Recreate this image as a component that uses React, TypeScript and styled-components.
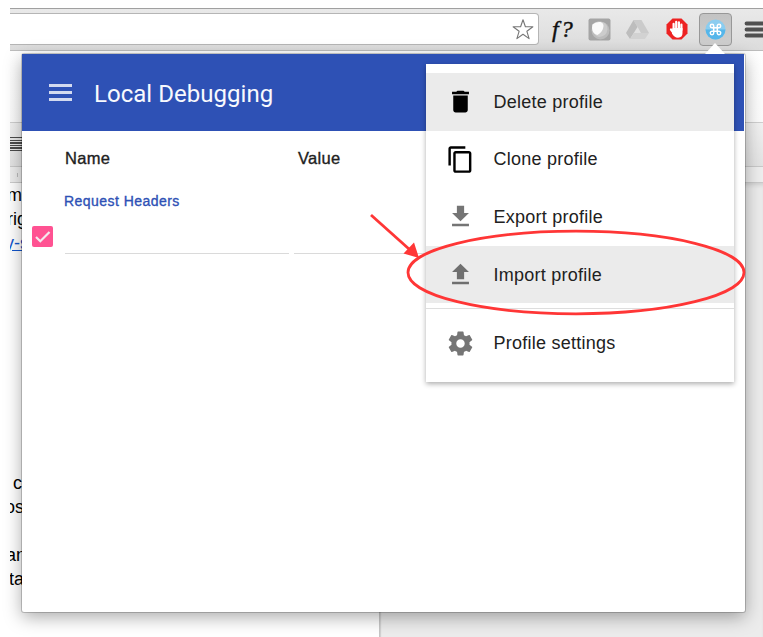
import React from "react";
import styled, { createGlobalStyle } from "styled-components";

const GlobalStyle = createGlobalStyle`
  * { box-sizing: border-box; }
  body { margin: 0; background: #fff; overflow: hidden; }
`;

const Screen = styled.main`
  position: relative;
  width: 763px;
  height: 637px;
  padding: 8px 0 0 10px;
  overflow: hidden;
  background: #fff;
  font-family: "Liberation Sans", Arial, sans-serif;
`;

const Browser = styled.div`
  height: 629px;
  display: flex;
  flex-direction: column;
  overflow: hidden;
`;

const BrowserBar = styled.div`
  height: 43px;
  flex: none;
  display: flex;
  padding-top: 4px;
  border-top: 1px solid #a0a0a0;
  border-bottom: 1px solid #bdbdbd;
  background: linear-gradient(#e9e9e9, #dcdcdc);
`;

const AddressBar = styled.div`
  width: 529px;
  height: 32px;
  flex: none;
  display: flex;
  justify-content: flex-end;
  padding: 4px 4px 0 0;
  border: 1px solid #b5b5b5;
  border-left: 0;
  border-radius: 0 4px 4px 0;
  background: #fff;
`;

const Extensions = styled.div`
  display: flex;
  align-items: center;
  height: 32px;
`;

const FontTool = styled.span`
  width: 26px;
  margin-left: 13px;
  font: italic 400 24px/30px "Liberation Serif", serif;
  letter-spacing: 2px;
  color: #111;
  -webkit-text-stroke: 0.4px #111;
  white-space: nowrap;
`;

const ExtensionIcon = styled.svg<{ $gap: number }>`
  flex: none;
  margin-left: ${(p) => p.$gap}px;
  display: block;
`;

const ActiveExtension = styled.div`
  width: 33px;
  height: 33px;
  flex: none;
  margin-left: 11px;
  display: grid;
  place-items: center;
  border: 1px solid #989898;
  border-radius: 4px;
  background: linear-gradient(#c3c3c3, #cecece);
`;

const PageTop = styled.div`
  height: 71px;
  flex: none;
  background: linear-gradient(#fff, #fbfbfb);
`;

const EditorBar = styled.div`
  height: 44px;
  flex: none;
  padding-top: 14px;
  border-top: 1px solid #cfcfcf;
  background: linear-gradient(#f1f1f1, #e3e3e3);
`;

const AlignLines = styled.div`
  width: 13px;
  height: 14px;
  background: repeating-linear-gradient(#4b4b4b 0 1.3px, #e8e8e8 1.3px 2.6px);
`;

const Ruler = styled.div`
  height: 17px;
  flex: none;
  padding: 6px 0 0 7px;
  border-top: 1px solid #c9c9c9;
  border-bottom: 1px solid #cacaca;
  background: #eee;
`;

const RulerTick = styled.div`
  width: 1px;
  height: 4px;
  background: #bbb;
`;

const Workspace = styled.div`
  flex: 1;
  display: flex;
  background: #ececec;
  box-shadow: inset 0 4px 4px -2px #d0d0d0;
`;

const Document = styled.div`
  width: 370px;
  border-right: 1px solid #c6c6c6;
  background: #fff;
  box-shadow: 1px 0 1px #d2d2d2;
  font-size: 18px;
  line-height: 24px;
  color: #000;
  overflow: hidden;
`;

const DocLine = styled.div<{ $shift: number; $gap?: number; $link?: boolean }>`
  height: 24px;
  margin-top: ${(p) => p.$gap ?? 0}px;
  text-indent: ${(p) => p.$shift}px;
  white-space: nowrap;
  color: ${(p) => (p.$link ? "#1155cc" : "inherit")};
  text-decoration: ${(p) => (p.$link ? "underline" : "none")};
`;

const Popup = styled.section`
  position: absolute;
  left: 22px;
  top: 54px;
  width: 723px;
  height: 558px;
  background: #fff;
  border-radius: 2px;
  box-shadow: 0 0 0 1px rgba(0, 0, 0, 0.19), 0 5px 18px rgba(0, 0, 0, 0.34);
`;

const PopupPointer = styled.svg`
  position: absolute;
  left: 682px;
  top: -12px;
  display: block;
`;

const AppBar = styled.header`
  height: 77px;
  display: flex;
  align-items: center;
  margin-right: 1px;
  padding-left: 27px;
  background: #2e51b5;
`;

const MenuBars = styled.div`
  width: 23px;
  height: 17px;
  margin-top: -1px;
  display: flex;
  flex-direction: column;
  justify-content: space-between;
`;

const Bar = styled.span`
  height: 3px;
  background: #d3daf0;
`;

const Title = styled.h1`
  margin: 3px 0 0 22px;
  font: 400 24px/32px Roboto, sans-serif;
  letter-spacing: 0.03px;
  color: #f8f9fd;
`;

const ColumnHeads = styled.div`
  display: grid;
  grid-template-columns: 233px 1fr;
  padding: 17px 0 1px 43px;
  font-size: 16.5px;
  line-height: 20px;
  letter-spacing: 0.3px;
  color: #212121;
  -webkit-text-stroke: 0.35px #212121;
`;

const GroupTitle = styled.h2`
  margin: 23px 0 0 42px;
  font-size: 14px;
  font-weight: 400;
  line-height: 18px;
  letter-spacing: 0.45px;
  color: #2e51b5;
  -webkit-text-stroke: 0.35px #2e51b5;
`;

const HeaderRow = styled.div`
  display: flex;
  align-items: flex-start;
  height: 50px;
  padding: 15px 0 0 10px;
`;

const Checkbox = styled.span`
  width: 21px;
  height: 21px;
  margin-top: 1px;
  display: grid;
  border-radius: 2px;
  background: #ff5292;
`;

const Field = styled.div<{ $width: number; $gap: number }>`
  width: ${(p) => p.$width}px;
  height: 29px;
  margin-left: ${(p) => p.$gap}px;
  border-bottom: 1px solid #dadada;
`;

const Menu = styled.nav`
  position: absolute;
  left: 404px;
  top: 9.5px;
  width: 308px;
  height: 318.5px;
  padding-top: 9.5px;
  background: #fff;
  box-shadow: 0 2px 5px rgba(0, 0, 0, 0.32);
`;

const MenuItem = styled.div<{ $active?: boolean }>`
  height: 57.6px;
  display: flex;
  align-items: center;
  padding-left: 19.5px;
  background: ${(p) => (p.$active ? "#ebebeb" : "#fff")};
  font-size: 18px;
  letter-spacing: 0.24px;
  color: #212121;
`;

const MenuLabel = styled.span`
  padding-top: 1px;
`;

const MenuIcon = styled.svg`
  width: 29px;
  height: 29px;
  flex: none;
  margin-right: 19px;
`;

const Divider = styled.div`
  height: 1px;
  margin: 5px 0 5px;
  background: #dedede;
`;

const Annotation = styled.svg`
  position: absolute;
  left: 0;
  top: 0;
  pointer-events: none;
`;

const menu = [
  { label: "Delete profile", color: "#000", active: true, d: "M6 19c0 1.1.9 2 2 2h8c1.1 0 2-.9 2-2V7H6v12zM19 4h-3.5l-1-1h-5l-1 1H5v2h14V4z" },
  { label: "Clone profile", color: "#000", d: "M16 1H4c-1.1 0-2 .9-2 2v14h2V3h12V1zm3 4H8c-1.1 0-2 .9-2 2v14c0 1.1.9 2 2 2h11c1.1 0 2-.9 2-2V7c0-1.1-.9-2-2-2zm0 16H8V7h11v14z" },
  { label: "Export profile", color: "#757575", d: "M19 9h-4V3H9v6H5l7 7 7-7zM5 18v2h14v-2H5z" },
  { label: "Import profile", color: "#6f6f6f", active: true, d: "M9 16h6v-6h4l-7-7-7 7h4zm-4 2h14v2H5z" },
];

const gear =
  "M19.43 12.98c.04-.32.07-.64.07-.98s-.03-.66-.07-.98l2.11-1.65c.19-.15.24-.42.12-.64l-2-3.46c-.12-.22-.39-.3-.61-.22l-2.49 1c-.52-.4-1.08-.73-1.69-.98l-.38-2.65C14.46 2.18 14.25 2 14 2h-4c-.25 0-.46.18-.49.42l-.38 2.65c-.61.25-1.17.59-1.69.98l-2.49-1c-.23-.09-.49 0-.61.22l-2 3.46c-.13.22-.07.49.12.64l2.11 1.65c-.04.32-.07.65-.07.98s.03.66.07.98l-2.11 1.65c-.19.15-.24.42-.12.64l2 3.46c.12.22.39.3.61.22l2.49-1c.52.4 1.08.73 1.69.98l.38 2.65c.03.24.24.42.49.42h4c.25 0 .46-.18.49-.42l.38-2.65c.61-.25 1.17-.59 1.69-.98l2.49 1c.23.09.49 0 .61-.22l2-3.46c.12-.22.07-.49-.12-.64l-2.11-1.65zM12 15.5c-1.93 0-3.5-1.57-3.5-3.5s1.57-3.5 3.5-3.5 3.5 1.57 3.5 3.5-1.57 3.5-3.5 3.5z";

function Toolbar() {
  return (
    <BrowserBar>
      <AddressBar>
        <svg width="22" height="23" viewBox="0 0 22 23">
          <path d="M11 1.8l2.4 7h7.5l-6 4.5 2.2 7.3-6.1-4.4-6.1 4.4 2.2-7.3-6-4.5h7.5z" fill="#fff" stroke="#777" strokeWidth="1.1" strokeLinejoin="round" />
        </svg>
      </AddressBar>
      <Extensions>
        <FontTool>f?</FontTool>
        <ExtensionIcon $gap={10} width="23" height="23" viewBox="0 0 23 23">
          <rect x=".5" y=".5" width="22" height="22" rx="2" fill="#a5a5a5" />
          <circle cx="12.5" cy="12.5" r="9" fill="#bcbcbc" />
          <path d="M4 7q2-3 6-3.5q10 0 9.5 8-1 7-8.500 7.500-7-2-7-12z" fill="#ccc" />
          <path d="M4.5 6.5q3-3 8-2.5 3 1 3 4-.5 6-6 9-5-1-5.500-7z" fill="#fafafa" />
        </ExtensionIcon>
        <ExtensionIcon $gap={15} width="23" height="21" viewBox="0 0 23 21">
          <path d="M7.5 1h8L23 14h-8z" fill="#cbcbcb" />
          <path d="M7.5 1l4 7L4 20 0 14z" fill="#bdbdbd" />
          <path d="M8 14h15l-4 6H4z" fill="#d2d2d2" />
        </ExtensionIcon>
        <ExtensionIcon $gap={17} width="22" height="22" viewBox="0 0 22 22">
          <path d="M6.5.5h9l6 6v9l-6 6h-9l-6-6v-9z" fill="#ed2222" />
          <path d="M7.6 12V5.800M10.200 11V3.800M12.900 11V4.300M15.400 12V6.500M5 11.500l3 4" fill="none" stroke="#fff" strokeWidth="2.2" strokeLinecap="round" />
          <path d="M6.5 10h10v5q0 4.500-4.500 4.700Q8 19.600 6 15.500z" fill="#fff" />
        </ExtensionIcon>
        <ActiveExtension>
          <svg width="21" height="21" viewBox="0 0 21 21">
            <circle cx="10.5" cy="10.5" r="10" fill="#8bcdf0" />
            <path d="M.5 10.5a10 10 0 0 0 20 0z" fill="#55b6ea" />
            <path d="M8.7 8.7h3.600v3.600H8.700zM8.700 8.700H7A1.700 1.700 0 1 1 8.700 7zM12.300 8.700V7A1.700 1.700 0 1 1 14 8.700zM12.300 12.300H14A1.700 1.700 0 1 1 12.300 14zM8.700 12.300V14A1.700 1.700 0 1 1 7 12.300z" fill="none" stroke="#fff" strokeWidth="1.5" />
          </svg>
        </ActiveExtension>
        <ExtensionIcon $gap={12} width="20" height="17" viewBox="0 0 20 17">
          <path d="M2.5 2.5h20M2.5 8.5h20M2.5 14.5h20" stroke="#505050" strokeWidth="3.8" strokeLinecap="round" />
        </ExtensionIcon>
      </Extensions>
    </BrowserBar>
  );
}

function ProfileMenu() {
  return (
    <Menu>
      {menu.map((item) => (
        <MenuItem key={item.label} $active={item.active}>
          <MenuIcon viewBox="0 0 24 24" fill={item.color}>
            <path d={item.d} />
          </MenuIcon>
          <MenuLabel>{item.label}</MenuLabel>
        </MenuItem>
      ))}
      <Divider />
      <MenuItem>
        <MenuIcon viewBox="0 0 24 24" fill="#757575">
          <path d={gear} />
        </MenuIcon>
        <MenuLabel>Profile settings</MenuLabel>
      </MenuItem>
    </Menu>
  );
}

export default function App() {
  return (
    <Screen>
      <GlobalStyle />
      <Browser>
        <Toolbar />
        <PageTop />
        <EditorBar>
          <AlignLines />
        </EditorBar>
        <Ruler>
          <RulerTick />
        </Ruler>
        <Workspace>
          <Document>
            <DocLine $shift={-3}>m</DocLine>
            <DocLine $shift={-3}>rig</DocLine>
            <DocLine $shift={-5} $link>y-s</DocLine>
            <DocLine $shift={3} $gap={216}>c</DocLine>
            <DocLine $shift={-5}>os</DocLine>
            <DocLine $shift={-4} $gap={24}>an</DocLine>
            <DocLine $shift={-1}>ta</DocLine>
          </Document>
        </Workspace>
      </Browser>
      <Popup>
        <PopupPointer width="22" height="13" viewBox="0 0 22 13">
          <path d="M1 12L11 1l10 11z" fill="#fff" />
        </PopupPointer>
        <AppBar>
          <MenuBars>
            <Bar />
            <Bar />
            <Bar />
          </MenuBars>
          <Title>Local Debugging</Title>
        </AppBar>
        <ColumnHeads>
          <span>Name</span>
          <span>Value</span>
        </ColumnHeads>
        <GroupTitle>Request Headers</GroupTitle>
        <HeaderRow>
          <Checkbox>
            <svg width="21" height="21" viewBox="0 0 21 21">
              <path d="M4 11l4.3 4.3L17.5 6" fill="none" stroke="#f4e9ee" strokeWidth="2.2" />
            </svg>
          </Checkbox>
          <Field $width={224} $gap={12} />
          <Field $width={224} $gap={5} />
        </HeaderRow>
        <ProfileMenu />
      </Popup>
      <Annotation width="763" height="637" viewBox="0 0 763 637">
        <ellipse cx="576" cy="272.5" rx="168" ry="41.3" fill="none" stroke="#ff3636" strokeWidth="2.8" />
        <path d="M371 215l38 34" stroke="#ff3636" strokeWidth="2.8" />
        <path d="M419 258l-15.5-4.5 10.5-11z" fill="#ff3636" />
      </Annotation>
    </Screen>
  );
}
